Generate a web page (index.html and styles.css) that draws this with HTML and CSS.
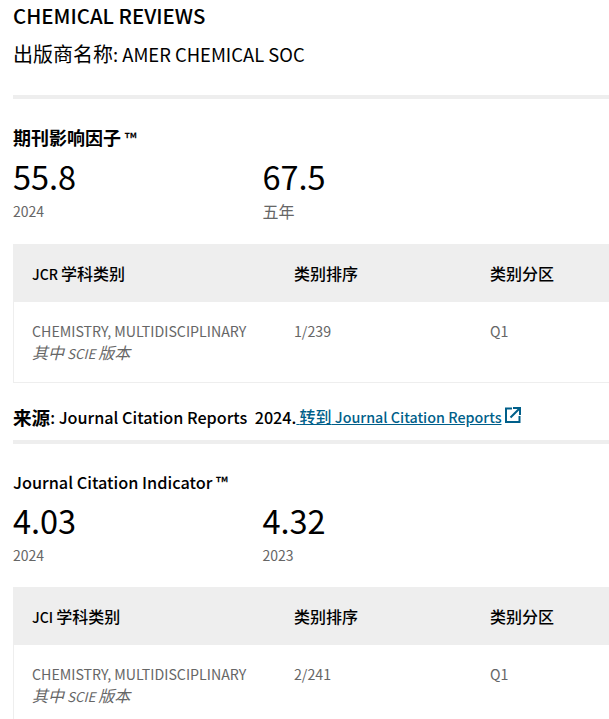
FILE: index.html
```html
<!DOCTYPE html>
<html lang="zh-CN">
<head>
<meta charset="utf-8">
<title>CHEMICAL REVIEWS</title>
<link rel="stylesheet" href="styles.css">
</head>
<body>
<main class="page">
  <header class="journal">
    <h1 class="journal-title">CHEMICAL REVIEWS</h1>
    <p class="publisher"><span class="zh">出版商名称</span>: AMER CHEMICAL SOC</p>
  </header>

  <section class="metric">
    <h2 class="metric-title"><span class="zh strong">期刊影响因子</span> ™</h2>
    <div class="scores">
      <div class="score"><div class="value">55.8</div><div class="label">2024</div></div>
      <div class="score"><div class="value">67.5</div><div class="label"><span class="zh">五年</span></div></div>
    </div>
    <div class="table">
      <div class="row head">
        <div class="cell c1">JCR <span class="zh">学科类别</span></div>
        <div class="cell c2"><span class="zh">类别排序</span></div>
        <div class="cell c3"><span class="zh">类别分区</span></div>
      </div>
      <div class="row body-row">
        <div class="cell c1">CHEMISTRY, MULTIDISCIPLINARY<br><em><span class="zh">其中</span> SCIE <span class="zh">版本</span></em></div>
        <div class="cell c2">1/239</div>
        <div class="cell c3">Q1</div>
      </div>
    </div>
    <p class="source"><span class="zh strong">来源</span>: Journal Citation Reports&nbsp; 2024.<a class="link" href="#"> <span class="zh">转到</span> Journal Citation Reports</a><svg class="ext" viewBox="0 0 16 16" width="16" height="16" aria-hidden="true"><path d="M7 1.5H1v13.5h13.5V9" fill="none" stroke="#005f8a" stroke-width="2"/><path d="M5.5 10.5 14 2M8 1h7v7" fill="none" stroke="#005f8a" stroke-width="2"/></svg></p>
  </section>

  <section class="metric">
    <h2 class="metric-title">Journal Citation Indicator ™</h2>
    <div class="scores">
      <div class="score"><div class="value">4.03</div><div class="label">2024</div></div>
      <div class="score"><div class="value">4.32</div><div class="label">2023</div></div>
    </div>
    <div class="table">
      <div class="row head">
        <div class="cell c1">JCI <span class="zh">学科类别</span></div>
        <div class="cell c2"><span class="zh">类别排序</span></div>
        <div class="cell c3"><span class="zh">类别分区</span></div>
      </div>
      <div class="row body-row">
        <div class="cell c1">CHEMISTRY, MULTIDISCIPLINARY<br><em><span class="zh">其中</span> SCIE <span class="zh">版本</span></em></div>
        <div class="cell c2">2/241</div>
        <div class="cell c3">Q1</div>
      </div>
    </div>
  </section>
</main>
</body>
</html>
```
FILE: styles.css
```css
* { box-sizing: border-box; }
html, body { margin: 0; height: 719px; overflow: hidden; background: #fff; }
body { font-family: "Noto Sans CJK SC", sans-serif; color: #000; }
.page { padding: 0 0 0 13px; }
.zh { font-size: 16px; }
.strong { font-weight: 700; }
.journal { height: 95px; padding-top: 2px; }
.journal-title { margin: 0; font-size: 20.4px; line-height: 26px; font-weight: 500; }
.publisher { margin: 12px 0 0; font-size: 18.4px; line-height: 28px; font-weight: 400; }
.publisher .zh { font-size: 20px; }
.metric { border-top: 4px solid #eee; padding-top: 26px; }
.metric-title { margin: 0; font-size: 16.3px; line-height: 24px; font-weight: 500; }
.metric-title .zh { font-size: 18px; }
.scores { display: flex; margin-top: 4px; }
.score { width: 249.5px; }
.value { font-size: 32.5px; line-height: 44px; }
.label { font-size: 14px; line-height: 20px; color: #666; margin-top: 3px; }
.table { margin-top: 22px; width: 620px; border: 1px solid #eee; border-top: 0; }
.row { display: flex; }
.head { background: #eee; height: 58px; margin: 0 -1px; padding-left: 1px; align-items: center; font-size: 14px; font-weight: 500; }
.body-row { height: 80px; padding-top: 19px; font-size: 14.2px; line-height: 21px; color: #666; }
.cell.c1 { width: 280px; padding-left: 18px; }
.cell.c2 { width: 196px; }
.cell.c3 { width: 120px; }
em { font-style: italic; font-size: 13.4px; }
.source { margin: 21px 0 10.5px; font-size: 16.2px; line-height: 24px; font-weight: 500; display: flex; align-items: center; white-space: pre; }
.source .strong { font-size: 18.6px; }
.link { color: #005f8a; text-decoration: underline; font-size: 14.3px; font-weight: 500; }
.ext { margin: 0 0 3px 3px; }
```
